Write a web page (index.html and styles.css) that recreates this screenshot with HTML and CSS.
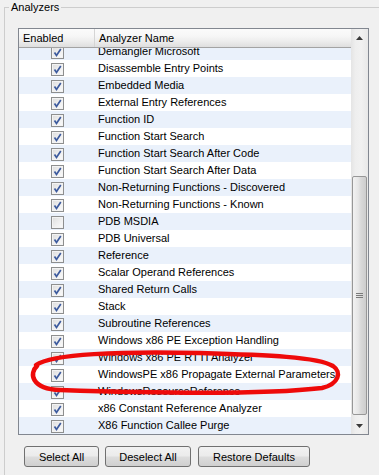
FILE: index.html
```html
<!DOCTYPE html>
<html lang="en">
<head>
    <meta charset="UTF-8">
    <title>Analyzers</title>
    <link rel="stylesheet" href="styles.css">
</head>
<body>
    <fieldset class="group">
        <legend>Analyzers</legend>

        <div class="list">
            <div class="grid">
                <div class="head">
                    <div class="col-en">Enabled</div>
                    <div class="col-name">Analyzer Name</div>
                </div>
                <div class="rows">
                    <div class="row first"><span class="cell-en"><span class="cb"><svg viewBox="0 0 11 11"><path d="M2.5 5.5 L4.5 8.5 L8.8 2"/></svg></span></span><span class="cell-name">Demangler Microsoft</span></div>
                    <div class="row"><span class="cell-en"><span class="cb"><svg viewBox="0 0 11 11"><path d="M2.5 5.5 L4.5 8.5 L8.8 2"/></svg></span></span><span class="cell-name">Disassemble Entry Points</span></div>
                    <div class="row"><span class="cell-en"><span class="cb"><svg viewBox="0 0 11 11"><path d="M2.5 5.5 L4.5 8.5 L8.8 2"/></svg></span></span><span class="cell-name">Embedded Media</span></div>
                    <div class="row"><span class="cell-en"><span class="cb"><svg viewBox="0 0 11 11"><path d="M2.5 5.5 L4.5 8.5 L8.8 2"/></svg></span></span><span class="cell-name">External Entry References</span></div>
                    <div class="row"><span class="cell-en"><span class="cb"><svg viewBox="0 0 11 11"><path d="M2.5 5.5 L4.5 8.5 L8.8 2"/></svg></span></span><span class="cell-name">Function ID</span></div>
                    <div class="row"><span class="cell-en"><span class="cb"><svg viewBox="0 0 11 11"><path d="M2.5 5.5 L4.5 8.5 L8.8 2"/></svg></span></span><span class="cell-name">Function Start Search</span></div>
                    <div class="row"><span class="cell-en"><span class="cb"><svg viewBox="0 0 11 11"><path d="M2.5 5.5 L4.5 8.5 L8.8 2"/></svg></span></span><span class="cell-name">Function Start Search After Code</span></div>
                    <div class="row"><span class="cell-en"><span class="cb"><svg viewBox="0 0 11 11"><path d="M2.5 5.5 L4.5 8.5 L8.8 2"/></svg></span></span><span class="cell-name">Function Start Search After Data</span></div>
                    <div class="row"><span class="cell-en"><span class="cb"><svg viewBox="0 0 11 11"><path d="M2.5 5.5 L4.5 8.5 L8.8 2"/></svg></span></span><span class="cell-name">Non-Returning Functions - Discovered</span></div>
                    <div class="row"><span class="cell-en"><span class="cb"><svg viewBox="0 0 11 11"><path d="M2.5 5.5 L4.5 8.5 L8.8 2"/></svg></span></span><span class="cell-name">Non-Returning Functions - Known</span></div>
                    <div class="row"><span class="cell-en"><span class="cb"></span></span><span class="cell-name">PDB MSDIA</span></div>
                    <div class="row"><span class="cell-en"><span class="cb"><svg viewBox="0 0 11 11"><path d="M2.5 5.5 L4.5 8.5 L8.8 2"/></svg></span></span><span class="cell-name">PDB Universal</span></div>
                    <div class="row"><span class="cell-en"><span class="cb"><svg viewBox="0 0 11 11"><path d="M2.5 5.5 L4.5 8.5 L8.8 2"/></svg></span></span><span class="cell-name">Reference</span></div>
                    <div class="row"><span class="cell-en"><span class="cb"><svg viewBox="0 0 11 11"><path d="M2.5 5.5 L4.5 8.5 L8.8 2"/></svg></span></span><span class="cell-name">Scalar Operand References</span></div>
                    <div class="row"><span class="cell-en"><span class="cb"><svg viewBox="0 0 11 11"><path d="M2.5 5.5 L4.5 8.5 L8.8 2"/></svg></span></span><span class="cell-name">Shared Return Calls</span></div>
                    <div class="row"><span class="cell-en"><span class="cb"><svg viewBox="0 0 11 11"><path d="M2.5 5.5 L4.5 8.5 L8.8 2"/></svg></span></span><span class="cell-name">Stack</span></div>
                    <div class="row"><span class="cell-en"><span class="cb"><svg viewBox="0 0 11 11"><path d="M2.5 5.5 L4.5 8.5 L8.8 2"/></svg></span></span><span class="cell-name">Subroutine References</span></div>
                    <div class="row"><span class="cell-en"><span class="cb"><svg viewBox="0 0 11 11"><path d="M2.5 5.5 L4.5 8.5 L8.8 2"/></svg></span></span><span class="cell-name">Windows x86 PE Exception Handling</span></div>
                    <div class="row"><span class="cell-en"><span class="cb"><svg viewBox="0 0 11 11"><path d="M2.5 5.5 L4.5 8.5 L8.8 2"/></svg></span></span><span class="cell-name">Windows x86 PE RTTI Analyzer</span></div>
                    <div class="row"><span class="cell-en"><span class="cb"><svg viewBox="0 0 11 11"><path d="M2.5 5.5 L4.5 8.5 L8.8 2"/></svg></span></span><span class="cell-name">WindowsPE x86 Propagate External Parameters</span></div>
                    <div class="row"><span class="cell-en"><span class="cb"><svg viewBox="0 0 11 11"><path d="M2.5 5.5 L4.5 8.5 L8.8 2"/></svg></span></span><span class="cell-name">WindowsResourceReference</span></div>
                    <div class="row"><span class="cell-en"><span class="cb"><svg viewBox="0 0 11 11"><path d="M2.5 5.5 L4.5 8.5 L8.8 2"/></svg></span></span><span class="cell-name">x86 Constant Reference Analyzer</span></div>
                    <div class="row"><span class="cell-en"><span class="cb"><svg viewBox="0 0 11 11"><path d="M2.5 5.5 L4.5 8.5 L8.8 2"/></svg></span></span><span class="cell-name">X86 Function Callee Purge</span></div>
                </div>
            </div>

            <div class="vscroll">
                <div class="arrow"><svg width="7" height="4" viewBox="0 0 7 4"><path d="M3.5 0 L7 4 L0 4 Z"/></svg></div>
                <div class="track">
                    <div class="thumb">
                        <svg width="7" height="7" viewBox="0 0 7 7"><path d="M0 1.5 H7 M0 3.5 H7 M0 5.5 H7"/></svg>
                    </div>
                </div>
                <div class="arrow"><svg width="7" height="4" viewBox="0 0 7 4"><path d="M0 0 L7 0 L3.5 4 Z"/></svg></div>
            </div>
        </div>

        <div class="buttons">
            <button class="btn btn-select">Select All</button>
            <button class="btn btn-deselect">Deselect All</button>
            <button class="btn btn-restore">Restore Defaults</button>
        </div>
    </fieldset>

    <!-- hand-drawn highlight around the row -->
    <svg class="mark" width="379" height="475" viewBox="0 0 379 475">
        <path d="M36 365 C52 354, 120 351, 200 353 C268 355, 318 357, 333 366 C342 372, 339 384, 322 388 C262 395, 150 393, 60 390 C31 389, 29 373, 37 366"/>
    </svg>
</body>
</html>
```

FILE: styles.css
```css
body {
    margin: 0;
    height: 475px;
    overflow: hidden;
    position: relative;
    background-color: #f0f0f0;
    color: #000;
    font-family: "Liberation Sans", Arial, sans-serif;
    font-size: 11px;
}
.group {
    box-sizing: border-box;
    margin: 1px 0 0 4px;
    padding: 14px 0 0 13px;
    width: 375px;
    height: 474px;
    border: 1px solid #cdcdcd;
    border-right: none;
    border-bottom: none;
    min-width: 0;
}
.group legend {
    padding: 0 2px;
    margin-left: -9px;
    line-height: 13px;
}
.list {
    width: 349px;
    display: flex;
    border: 1px solid #828790;
    background-color: #fff;
}
.grid {
    flex: 1;
    min-width: 0;
}
.head {
    display: flex;
    height: 18px;
    border-bottom: 1px solid #a3a3a3;
    background: linear-gradient(to bottom, #fbfbfb 0%, #f6f6f6 40%, #ececec 70%, #dedede 100%);
}
.head div {
    line-height: 18px;
    padding-left: 4px;
    white-space: nowrap;
}
.head .col-en {
    width: 71px;
    border-right: 1px solid #d5d5d5;
}
.rows {
    height: 386px;
    overflow: hidden;
}
.row {
    display: flex;
    height: 17px;
    line-height: 17px;
    white-space: nowrap;
}
.row:nth-child(odd) {
    background-color: #eaf1fb;
}
.row.first {
    margin-top: -5px;
}
.cell-en {
    width: 76px;
    display: flex;
    justify-content: center;
    align-items: flex-start;
}
.cell-name {
    padding-left: 3px;
}
.cb {
    width: 13px;
    height: 13px;
    margin-top: 3px;
    box-sizing: border-box;
    border: 1px solid #8e8f8f;
    background: linear-gradient(135deg, #dcdcdc 0%, #eeeeee 50%, #fbfbfb 100%);
    box-shadow: inset 0 0 0 1px #f3f3f3;
    display: flex;
}
.cb svg {
    width: 11px;
    height: 11px;
}
.cb path {
    fill: none;
    stroke: #3d5b9e;
    stroke-width: 1.7;
}
.vscroll {
    width: 17px;
    display: flex;
    flex-direction: column;
    background: linear-gradient(to right, #e4e4e4 0%, #eeeeee 25%, #f1f1f1 60%, #e8e8e8 100%);
}
.arrow {
    height: 17px;
    display: flex;
    justify-content: center;
    align-items: center;
}
.arrow path {
    fill: #3a3a3a;
}
.track {
    flex: 1;
    padding-top: 130px;
}
.thumb {
    height: 237px;
    margin: 0 1px;
    border: 1px solid #979797;
    border-radius: 2px;
    background: linear-gradient(to right, #f2f2f2 0%, #e6e6e6 40%, #d9d9d9 60%, #cdcdcd 100%);
    display: flex;
    justify-content: center;
    align-items: center;
}
.thumb path {
    stroke: #7a7a7a;
    stroke-width: 1;
}
.buttons {
    display: flex;
    gap: 6px;
    margin-top: 11px;
    padding-left: 6px;
}
.btn {
    height: 21px;
    padding: 0;
    border: 1px solid #707070;
    border-radius: 3px;
    background: linear-gradient(to bottom, #f2f2f2 0%, #ebebeb 48%, #dddddd 52%, #cfcfcf 100%);
    font-family: inherit;
    font-size: 11px;
    color: #000;
}
.btn-select {
    width: 75px;
}
.btn-deselect {
    width: 86px;
}
.btn-restore {
    width: 112px;
    margin-left: 1px;
}
.mark {
    position: absolute;
    top: 0;
    left: 0;
    pointer-events: none;
}
.mark path {
    fill: none;
    stroke: #ee0a0a;
    stroke-width: 4.5;
    stroke-linecap: round;
}
```
